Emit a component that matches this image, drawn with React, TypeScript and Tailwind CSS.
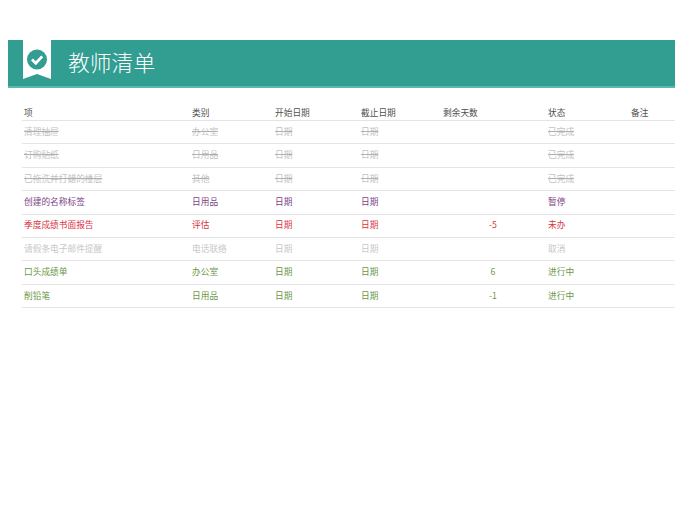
const rows = [
  { c: "text-[#c2c2c2] line-through decoration-[#b0b0b0]", item: "清理抽屉", cat: "办公室", days: "", status: "已完成" },
  { c: "text-[#c2c2c2] line-through decoration-[#b0b0b0]", item: "订购贴纸", cat: "日用品", days: "", status: "已完成" },
  { c: "text-[#c2c2c2] line-through decoration-[#b0b0b0]", item: "已拖洗并打蜡的楼层", cat: "其他", days: "", status: "已完成" },
  { c: "text-[#7d3f86]", item: "创建的名称标签", cat: "日用品", days: "", status: "暂停" },
  { c: "text-[#d8353f]", item: "季度成绩书面报告", cat: "评估", days: "-5", status: "未办" },
  { c: "text-[#c8c8c8]", item: "请假条电子邮件提醒", cat: "电话联络", days: "", status: "取消" },
  { c: "text-[#6c9647]", item: "口头成绩单", cat: "办公室", days: "6", status: "进行中" },
  { c: "text-[#6c9647]", item: "削铅笔", cat: "日用品", days: "-1", status: "进行中" },
];

const grid = "grid grid-cols-[168px_83px_86px_82px_105px_83px_1fr] items-center border-b border-[#e4e4e4]";

export default function App() {
  return (
    <div className="min-h-[520px] bg-white pt-10 font-['Noto_Sans_CJK_SC','Liberation_Sans',sans-serif]">
      <div className="ml-2 flex h-12 items-start border-b-2 border-[#5cb8a8] bg-[#329d91]">
        <svg className="ml-[15px] h-[39px] w-7 shrink-0" viewBox="0 0 28 39">
          <path d="M0 0H28V39L14 34L0 39Z" fill="#fff" />
          <circle cx="14" cy="19.5" r="10" fill="#329d91" />
          <path d="M9 19.5L12.8 23.3L19.2 16.4" fill="none" stroke="#fff" strokeWidth="2.8" />
        </svg>
        <h1 className="ml-[17px] mt-[7px] text-[21.8px] leading-[30px] font-light text-white">教师清单</h1>
      </div>
      <div className="ml-[22px] mt-[19px] text-[8.7px]">
        <div className={`${grid} h-[14px] border-[#dedede] pl-0.5 leading-none text-[#505050]`}>
          <span>项</span>
          <span>类别</span>
          <span>开始日期</span>
          <span>截止日期</span>
          <span>剩余天数</span>
          <span>状态</span>
          <span>备注</span>
        </div>
        {rows.map((r) => (
          <div key={r.item} className={`${grid} h-[23.4px] pl-0.5 leading-none ${r.c}`}>
            <span>{r.item}</span>
            <span>{r.cat}</span>
            <span>日期</span>
            <span>日期</span>
            <span className="pr-[5px] text-center no-underline">{r.days}</span>
            <span>{r.status}</span>
            <span />
          </div>
        ))}
      </div>
    </div>
  );
}
